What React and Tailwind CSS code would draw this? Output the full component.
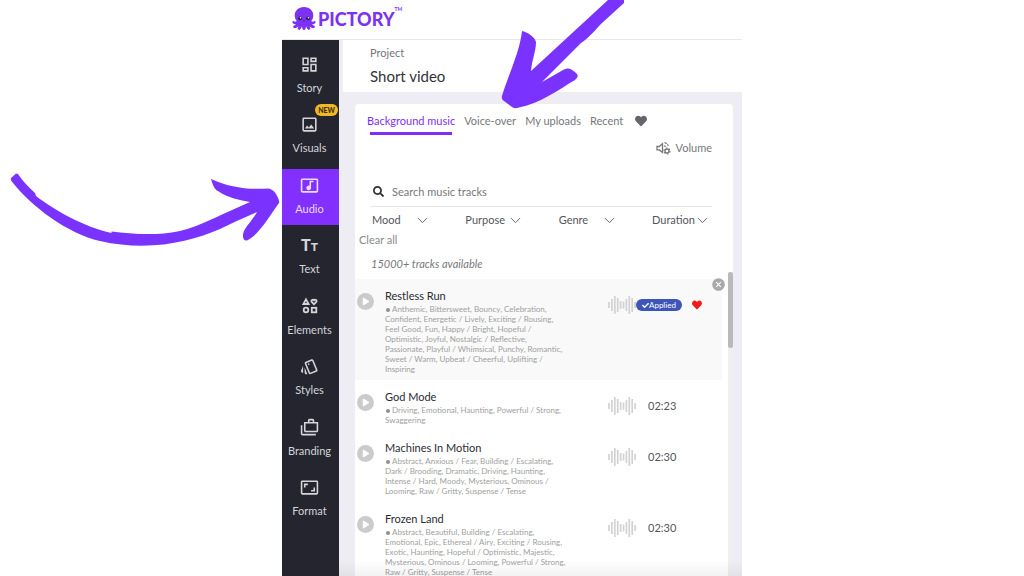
import React, { useState } from 'react';
import {
    MdOutlineDashboard,
    MdOutlineImage,
    MdOutlineMusicVideo,
    MdOutlineStyle,
    MdOutlineCases,
    MdOutlineAspectRatio,
} from 'react-icons/md';
import { FaSearch, FaHeart, FaCheck } from 'react-icons/fa';
import { ChevronDown } from 'lucide-react';

const TextIcon = () => (
    <span className="flex h-[18px] items-baseline text-[16px] leading-[18px] font-black" aria-hidden="true">
        T<span className="text-[12px]">T</span>
    </span>
);

const ElementsIcon = () => (
    <svg width="18" height="18" viewBox="0 0 18 18" fill="none" stroke="currentColor" strokeWidth="1.8">
        <path d="M5 2.4 7.6 7H2.4Z" />
        <path d="M13 7.3 10.7 5a1.4 1.4 0 0 1 2.3-1.7A1.4 1.4 0 0 1 15.3 5Z" />
        <circle cx="5" cy="13" r="2.3" />
        <rect x="10.8" y="10.8" width="4.5" height="4.5" />
    </svg>
);

const VolumeIcon = () => (
    <svg width="15" height="14" viewBox="0 0 15 14" fill="none" stroke="currentColor" strokeWidth="1.3">
        <path d="M1 5.500h2.300L6.500 2.600v8.800L3.300 8.900H1Z" />
        <path d="M8.500 1.700c1.800.4 3.200 1.500 3.700 3.300" strokeDasharray="2.500 1" />
        <path d="M8.300 4.700c.6.300.9.700 1 1.300" />
        <circle cx="11" cy="10" r="2" />
        <circle cx="11" cy="10" r="3" strokeWidth="1.200" strokeDasharray="1.540 1.600" />
    </svg>
);

const Octopus = () => (
    <svg width="24" height="25" viewBox="0 0 24 25" fill="#7c32f5" aria-hidden="true">
        <path d="M12 1C6.300 1 2.500 5 2.700 9.700c.1 2.300 1 3.900 2 5.300-.7.800-1.800.9-2.700.2C1 14.600 0 15.500.5 16.600c.5 1.300 2 1.900 3.500 1.700-.6 1-1.700 1-2.400 1.400-.9.500-.6 1.900.5 2.200 1.600.4 3.100-.3 4.200-1.400-.1 1-.9 1.600-.6 2.500.4 1 1.800.9 2.600.2.900-.8 1.300-1.900 1.600-3 .3 1.500.6 3.800 2.100 3.800s1.800-2.300 2.100-3.800c.3 1.100.7 2.200 1.600 3 .8.700 2.200.8 2.600-.2.300-.9-.5-1.500-.6-2.500 1.100 1.100 2.600 1.800 4.200 1.400 1.100-.3 1.400-1.700.5-2.200-.7-.4-1.800-.4-2.400-1.400 1.500.2 3-.4 3.500-1.700.5-1.100-.5-2-1.500-1.400-.9.700-2 .6-2.700-.2 1-1.400 1.900-3 2-5.300C21.500 5 17.700 1 12 1Z" />
        <circle cx="8" cy="12.300" r="1.900" fill="#2a1f4d" />
        <circle cx="16" cy="12.300" r="1.900" fill="#2a1f4d" />
        <circle cx="8.500" cy="11.800" r=".8" fill="#fff" />
        <circle cx="16.500" cy="11.800" r=".8" fill="#fff" />
        <path d="M11 14.400c.5.700 1.500.7 2 0" fill="none" stroke="#2a1f4d" strokeWidth=".7" />
    </svg>
);

const waveBars = [6, 12, 18, 14, 8, 7, 12, 18, 14, 6];

const Wave = () => (
    <svg width="28" height="18" viewBox="0 0 28 18" stroke="#d2d2d2" strokeWidth="1.700" aria-hidden="true">
        {waveBars.map((h, i) => (
            <path key={i} d={`M${i * 2.9 + 1} ${9 - h / 2}v${h}`} />
        ))}
    </svg>
);

const PlayIcon = () => (
    <svg width="17" height="17" viewBox="0 0 17 17">
        <circle cx="8.500" cy="8.500" r="8.500" fill="#cbcbcb" />
        <path d="M6.300 5 12 8.500 6.300 12Z" fill="#fff" stroke="#fff" strokeLinejoin="round" />
    </svg>
);

const navItems = [
    { label: 'Story', icon: <MdOutlineDashboard size={19} /> },
    { label: 'Visuals', icon: <MdOutlineImage size={19} />, isNew: true },
    { label: 'Audio', icon: <MdOutlineMusicVideo size={19} /> },
    { label: 'Text', icon: <TextIcon /> },
    { label: 'Elements', icon: <ElementsIcon /> },
    { label: 'Styles', icon: <MdOutlineStyle size={19} /> },
    { label: 'Branding', icon: <MdOutlineCases size={19} /> },
    { label: 'Format', icon: <MdOutlineAspectRatio size={19} /> },
];

const tabs = ['Background music', 'Voice-over', 'My uploads', 'Recent'];

const filters = ['Mood', 'Purpose', 'Genre', 'Duration'];

const tracks = [
    {
        title: 'Restless Run',
        tags: 'Anthemic, Bittersweet, Bouncy, Celebration, Confident, Energetic / Lively, Exciting / Rousing, Feel Good, Fun, Happy / Bright, Hopeful / Optimistic, Joyful, Nostalgic / Reflective, Passionate, Playful / Whimsical, Punchy, Romantic, Sweet / Warm, Upbeat / Cheerful, Uplifting / Inspiring',
        applied: true,
    },
    {
        title: 'God Mode',
        tags: 'Driving, Emotional, Haunting, Powerful / Strong, Swaggering',
        duration: '02:23',
    },
    {
        title: 'Machines In Motion',
        tags: 'Abstract, Anxious / Fear, Building / Escalating, Dark / Brooding, Dramatic, Driving, Haunting, Intense / Hard, Moody, Mysterious, Ominous / Looming, Raw / Gritty, Suspense / Tense',
        duration: '02:30',
    },
    {
        title: 'Frozen Land',
        tags: 'Abstract, Beautiful, Building / Escalating, Emotional, Epic, Ethereal / Airy, Exciting / Rousing, Exotic, Haunting, Hopeful / Optimistic, Majestic, Mysterious, Ominous / Looming, Powerful / Strong, Raw / Gritty, Suspense / Tense',
        duration: '02:30',
    },
];

const Sidebar = ({ active, onSelect }) => (
    <nav className="flex w-[57px] shrink-0 flex-col justify-between bg-[#24252f] pt-2 pb-[49px]">
        {navItems.map((item) => (
            <button
                key={item.label}
                onClick={() => onSelect(item.label)}
                className={`relative flex h-14 flex-col items-center justify-between pt-[7px] pr-[2px] pb-2 text-[11px] leading-[16px] ${active === item.label ? 'bg-[#8230ff] text-[#eadcff]' : 'text-[#d5d5d8]'
                    }`}
            >
                {item.icon}
                <span>{item.label}</span>
                {item.isNew && (
                    <span className="absolute -top-1 right-px rounded-full bg-[#f2b824] px-[3px] text-[7px] leading-[12px] font-black text-[#3b2f10]">
                        NEW
                    </span>
                )}
            </button>
        ))}
    </nav>
);

const Track = ({ track }) => (
    <li className={`relative mr-[11px] flex items-start pt-[9px] pb-[6px] pl-[2px] ${track.applied ? 'bg-[#f9f9f9]' : ''}`}>
        <button aria-label={`Play ${track.title}`} className="mt-[5px] mr-[11px] shrink-0">
            <PlayIcon />
        </button>
        <div className="w-[181px] shrink-0">
            <h3 className="text-[11px] leading-[16px] text-[#2c2c34]">{track.title}</h3>
            <p className="text-[8px] leading-[10px] text-[#a0a0a0]">
                <span className="mr-[2px] ml-px inline-block size-1 rounded-full bg-[#8f8f8f] align-middle" />
                {track.tags}
            </p>
        </div>
        <div className="mt-2 ml-[42px] flex h-[18px] items-center">
            <Wave />
            {track.applied ? (
                <>
                    <button className="flex h-3 items-center rounded-full bg-[#3d55b8] px-[6px] text-[8px] leading-[12px] text-white">
                        <FaCheck size={7} />
                        Applied
                    </button>
                    <button aria-label="Remove from favourites" className="ml-[10px] text-[#f01d1d]">
                        <FaHeart size={10} />
                    </button>
                </>
            ) : (
                <span className="ml-3 text-[11px] leading-[16px] text-[#55555c]">{track.duration}</span>
            )}
        </div>
        {track.applied && (
            <button aria-label="Remove track" className="absolute -top-px -right-[3px]">
                <svg width="13" height="13" viewBox="0 0 13 13">
                    <circle cx="6.500" cy="6.500" r="6.300" fill="#a9a9a9" />
                    <path d="m4.200 4.200 4.600 4.600m0-4.600L4.200 8.800" stroke="#fff" strokeWidth="1.200" />
                </svg>
            </button>
        )}
    </li>
);

// Hand drawn pointers over the app
const Arrows = () => (
    <svg
        className="pointer-events-none absolute top-0 left-1/2 -translate-x-1/2"
        width="1024"
        height="576"
        viewBox="0 0 1024 576"
        fill="#7a33ff"
        aria-hidden="true"
    >
        <path d="M608 0 531 71C532 60 536 51 536 42 535 37 527 32 522 31 520 51 508 76 502 96Q501 99 504 101L512 107Q514 109 519 107.500C541 103 558 90 575 80Q580 76 576 73C572 69 568 67 564 69.500L542 82 581 43C590 37 596 29 602 23L624 3V0Z" />
        <path d="M16 173.500 11 178Q10 180 13 183C31 206 68 234 100 241 148 252 190 242 220 229Q238 220 257 212C252 222 242 229 243 237Q244 242 248 240C259 234 269 217 279 203Q280 201 276 194 273 189 268 188.500C247 190 229 187 211 179 213 186 215 190 218 191 228 198 240 200 250 202 228 211 201 226 180 231 156 236 133 234 111.500 231.500V233C84 227 54 210 36 196L35 193C28 187 22 180 18 174Z" />
    </svg>
);

const App = () => {
    const [activeNav, setActiveNav] = useState('Audio');
    const [activeTab, setActiveTab] = useState('Background music');
    const [query, setQuery] = useState('');

    return (
        <div className="relative h-screen overflow-hidden bg-white font-['Lato',sans-serif]">
            <div className="mx-auto flex h-full w-full max-w-[460px] flex-col">
                <header className="flex h-10 shrink-0 items-start border-b border-[#e8e8e8] pt-[6px] pl-[10px]">
                    <Octopus />
                    <span className="ml-[2px] text-[18px] leading-[26px] font-black text-[#7c32f5]">PICTORY</span>
                    <span className="text-[5px] leading-[6px] font-bold text-[#7c32f5]">TM</span>
                </header>

                <div className="flex min-h-0 flex-1">
                    <Sidebar active={activeNav} onSelect={setActiveNav} />

                    <main className="relative flex min-w-0 flex-1 flex-col bg-[#eeedf3]">
                        <div className="ml-1 h-[52px] shrink-0 bg-white pt-[5px] pl-[27px]">
                            <p className="text-[11px] leading-[16px] text-[#75757a]">Project</p>
                            <h1 className="mt-[6px] text-[15px] leading-[18px] text-[#33333a]">Short video</h1>
                        </div>

                        <section className="mt-3 mr-[9px] ml-4 flex min-h-0 flex-1 flex-col rounded-t bg-white">
                            <div className="flex items-start gap-[9px] pt-[9px] pl-3">
                                {tabs.map((tab) => (
                                    <button
                                        key={tab}
                                        onClick={() => setActiveTab(tab)}
                                        className={`text-[11px] leading-[16px] whitespace-nowrap ${activeTab === tab ? 'text-[#7b2ff7]' : 'text-[#77777c]'
                                            }`}
                                    >
                                        {tab}
                                        {activeTab === tab && <span className="mx-[3px] mt-[3px] block h-[3px] bg-[#7b2ff7]" />}
                                    </button>
                                ))}
                                <button aria-label="Favourites" className="ml-[3px] mt-[2px] text-[#65656b]">
                                    <FaHeart size={12} />
                                </button>
                            </div>

                            <button className="mt-[5px] mr-[21px] flex items-center gap-[5px] self-end text-[11px] leading-[16px] text-[#77777c]">
                                <VolumeIcon />
                                Volume
                            </button>

                            <label className="mt-[28px] mr-[21px] ml-[15px] flex h-[23px] items-start gap-2 border-b border-[#e6e6e6] pl-[3px]">
                                <FaSearch size={11} className="mt-[2px] shrink-0 text-[#303036]" />
                                <input
                                    type="text"
                                    aria-label="Search music tracks"
                                    placeholder="Search music tracks"
                                    value={query}
                                    onChange={(e) => setQuery(e.target.value)}
                                    className="h-4 min-w-0 flex-1 text-[11px] leading-[16px] outline-none placeholder:text-[#77777c]"
                                />
                            </label>

                            <div className="mt-[5px] mr-[25px] ml-[17px] flex justify-between">
                                {filters.map((name) => (
                                    <label key={name} className="relative flex w-14 items-center">
                                        <select
                                            aria-label={name}
                                            className="w-full appearance-none text-[11px] leading-[16px] text-[#55555b] outline-none"
                                        >
                                            <option>{name}</option>
                                        </select>
                                        <ChevronDown
                                            size={17}
                                            strokeWidth={1.4}
                                            className="pointer-events-none absolute -right-[3px] text-[#66666c]"
                                        />
                                    </label>
                                ))}
                            </div>

                            <button className="mt-1 ml-1 self-start text-[11px] leading-[16px] text-[#88888c]">Clear all</button>
                            <p className="mt-2 ml-4 text-[11px] leading-[16px] text-[#77777c] italic">15000+ tracks available</p>

                            <div className="relative min-h-0 flex-1">
                                <ul className="h-full overflow-hidden pt-[7px]">
                                    {tracks.map((track) => (
                                        <Track key={track.title} track={track} />
                                    ))}
                                </ul>
                                <div className="absolute top-0 right-0 h-full w-[5px] bg-[#efeff0]">
                                    <div className="h-[76px] rounded-full bg-[#b9b9b9]" />
                                </div>
                            </div>
                        </section>

                        <div className="pointer-events-none absolute inset-x-0 bottom-0 h-4 bg-linear-to-b from-transparent to-black/5" />
                    </main>
                </div>
            </div>
            <Arrows />
        </div>
    );
};

export default App;
